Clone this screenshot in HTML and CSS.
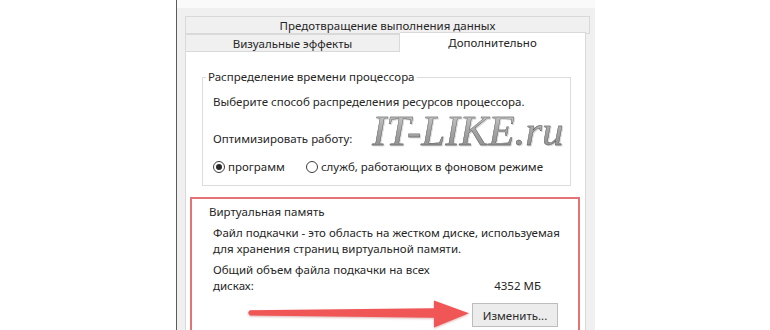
FILE: index.html
```html
<!DOCTYPE html>
<html lang="ru">
<head>
    <meta charset="UTF-8">
    <meta name="viewport" content="width=device-width, initial-scale=1.0">
    <title>Параметры быстродействия</title>
    <link rel="stylesheet" href="styles.css">
</head>
<body>

    <div class="dialog">

        <!-- Tabs -->
        <div class="tabs">
            <div class="tab-row">
                <div class="tab tab-wide">Предотвращение выполнения данных</div>
            </div>
            <div class="tab-row">
                <div class="tab tab-visual">Визуальные эффекты</div>
                <div class="tab active">Дополнительно</div>
            </div>
        </div>

        <div class="panel">

            <!-- CPU scheduling -->
            <fieldset class="group">
                <legend>Распределение времени процессора</legend>
                <div class="group-body">
                    <p class="line">Выберите способ распределения ресурсов процессора.</p>
                    <p class="line optimize">Оптимизировать работу:</p>
                    <div class="radio-row">
                        <label class="radio"><span class="radio-dot checked"></span>программ</label>
                        <label class="radio"><span class="radio-dot"></span>служб, работающих в фоновом режиме</label>
                    </div>
                    <div class="watermark">IT-LIKE.ru</div>
                </div>
            </fieldset>

            <!-- Virtual memory -->
            <div class="vm-group">
                <div class="vm-title">Виртуальная память</div>
                <div class="vm-body">
                    <p class="line">Файл подкачки - это область на жестком диске, используемая<br>для хранения страниц виртуальной памяти.</p>
                    <div class="size-row">
                        <span class="size-label">Общий объем файла подкачки на всех<br>дисках:</span>
                        <span class="size-value">4352 МБ</span>
                    </div>
                </div>
                <div class="button-row">
                    <button class="btn">Изменить...</button>
                </div>
                <svg class="arrow" width="226" height="30" viewBox="0 0 226 30">
                    <path d="M5,11.2 L189,9.2 L189,1.5 L224,14.2 L189,28.5 L189,18.8 L5,16.4 Q1.5,13.8 5,11.2 Z" fill="#f05656"/>
                </svg>
            </div>

        </div>
    </div>

</body>
</html>
```

FILE: styles.css
```css
body { margin: 0; background: #fff; font-family: "Noto Sans", "Open Sans", sans-serif; font-size: 11.5px; color: #262626; }

.dialog { margin-left: 176px; width: 419px; height: 330px; box-sizing: border-box; border-left: 1px solid #5b5b5b; background: linear-gradient(#fafafa 0 8px, #f0f0f0 8px); padding: 16px 0 0 8px; overflow: hidden; }

/* tabs */
.tabs { width: 405px; }
.tab-row { display: flex; height: 18px; }
.tab { height: 18px; box-sizing: border-box; border: 1px solid #d9d9d9; line-height: 18px; text-align: center; background: #f0f0f0; white-space: nowrap; }
.tab-wide { flex: 1; }
.tab-visual { width: 215px; line-height: 17px; }
.tab.active { width: 186px; height: 20px; margin-top: -2px; background: #fff; border-bottom: none; border-left: none; line-height: 19px; }

/* page */
.panel { width: 401px; height: 300px; box-sizing: border-box; background: #fff; border: 1px solid #d9d9d9; border-top: none; padding: 17px 5px 0 4px; }

.group { margin: 0 9px 0 12px; padding: 9px 10px 10px; border: 1px solid #dcdcdc; min-width: 0; }
.group legend { margin-left: -7px; padding: 0 2px; line-height: 16px; }
.group-body { position: relative; }

.line { margin: 0; line-height: 16px; white-space: nowrap; }
.optimize { margin-top: 21px; }

.radio-row { display: flex; gap: 21px; margin-top: 12px; line-height: 16px; }
.radio { display: flex; align-items: center; gap: 3px; white-space: nowrap; }
.radio-dot { width: 12px; height: 12px; box-sizing: border-box; border: 1px solid #3c3c3c; border-radius: 50%; display: flex; align-items: center; justify-content: center; background: #fff; }
.radio-dot.checked::after { content: ""; width: 6px; height: 6px; border-radius: 50%; background: #2a2a2a; }

.watermark { position: absolute; left: 159px; top: 15px; font-family: "Liberation Serif", "DejaVu Serif", serif; font-style: italic; font-size: 43px; line-height: 43px; white-space: nowrap; background: linear-gradient(#d2d2d2, #a6a6a6 50%, #8a8a8a); -webkit-background-clip: text; background-clip: text; color: transparent; -webkit-text-stroke: 0.4px #555; filter: drop-shadow(1px 1px 0 rgba(0,0,0,0.15)); }

/* virtual memory, marked in red */
.vm-group { position: relative; margin-top: 11px; height: 160px; border: 2px solid #e57373; padding: 5px 20px 0 17px; }
.vm-title { line-height: 16px; }
.vm-body { margin-left: 4px; margin-top: 5px; }
.size-row { display: flex; align-items: flex-end; margin-top: 5px; line-height: 16px; }
.size-label { white-space: nowrap; }
.size-value { margin-left: auto; padding-right: 17px; }
.button-row { display: flex; justify-content: flex-end; margin-top: 9px; }
.btn { width: 86px; height: 24px; font-family: inherit; font-size: 11.5px; color: #2a2a2a; background: #ececec; border: 1px solid #bdbdbd; padding: 0; }

.arrow { position: absolute; left: 53px; top: 100px; filter: drop-shadow(0 1px 1px rgba(160,40,40,0.35)); }
```
